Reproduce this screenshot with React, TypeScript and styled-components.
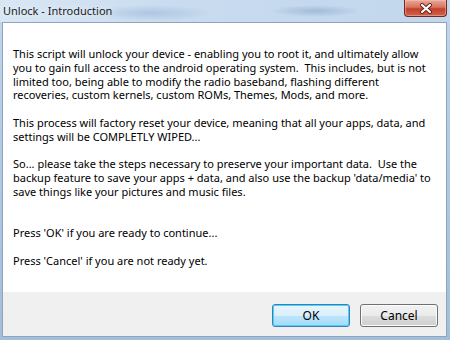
import { createGlobalStyle, styled } from 'styled-components';

const GlobalStyle = createGlobalStyle`
  html, body {
    margin: 0;
    padding: 0;
    background: #ffffff;
  }
`;

const MESSAGE = [
  'This script will unlock your device - enabling you to root it, and ultimately allow',
  'you to gain full access to the android operating system.  This includes, but is not',
  'limited too, being able to modify the radio baseband, flashing different',
  'recoveries, custom kernels, custom ROMs, Themes, Mods, and more.',
  '',
  'This process will factory reset your device, meaning that all your apps, data, and',
  'settings will be COMPLETLY WIPED...',
  '',
  'So... please take the steps necessary to preserve your important data.  Use the',
  "backup feature to save your apps + data, and also use the backup 'data/media' to",
  'save things like your pictures and music files.',
  '',
  '',
  "Press 'OK' if you are ready to continue...",
  '',
  "Press 'Cancel' if you are not ready yet.",
].join('\n');

export default function App() {
  return (
    <>
      <GlobalStyle />
      <StyledWindow>
        <StyledTitleBar>
          <StyledTitle>Unlock - Introduction</StyledTitle>
          <StyledClose aria-label="Close">
            <svg width="14" height="11" viewBox="0 0 14 11">
              <path d="M3 2 L11 9 M11 2 L3 9" stroke="#5a2318" strokeWidth="4" strokeLinecap="round" />
              <path d="M3 2 L11 9 M11 2 L3 9" stroke="#ffffff" strokeWidth="2.2" strokeLinecap="round" />
            </svg>
          </StyledClose>
        </StyledTitleBar>
        <StyledClient>
          <StyledContent>
            <StyledMessage>{MESSAGE}</StyledMessage>
          </StyledContent>
          <StyledFooter>
            <StyledButton $primary>OK</StyledButton>
            <StyledButton>Cancel</StyledButton>
          </StyledFooter>
        </StyledClient>
      </StyledWindow>
    </>
  );
}

const StyledWindow = styled.div`
  width: 450px;
  height: 340px;
  box-sizing: border-box;
  display: flex;
  flex-direction: column;
  padding: 0 3px 3px 2px;
  background: linear-gradient(to bottom, #c4d8ee 0%, #b6cde7 30%, #a4bdd9 100%);
  font-family: 'Noto Sans', 'Open Sans', sans-serif;
`;

const StyledTitleBar = styled.div`
  height: 22px;
  display: flex;
  align-items: flex-start;
  justify-content: space-between;
  background:
    radial-gradient(ellipse 60px 8px at 150px 13px, rgba(150, 180, 215, 0.55), transparent),
    radial-gradient(ellipse 45px 6px at 315px 11px, rgba(120, 150, 190, 0.45), transparent),
    linear-gradient(to right, #d9e7f5 0%, #c8dbef 40%, #c2d6ed 100%);
  margin: 0 -3px 0 -2px;
  padding: 0 3px 0 2px;
`;

const StyledTitle = styled.span`
  font-size: 11px;
  line-height: 22px;
  color: #1b1b1b;
  padding-left: 1px;
  text-shadow: 0 0 6px rgba(255, 255, 255, 0.9);
`;

const StyledClose = styled.div`
  width: 43px;
  height: 17px;
  box-sizing: border-box;
  display: flex;
  align-items: center;
  justify-content: center;
  border: 1px solid #6e2a20;
  border-top: none;
  border-radius: 0 0 4px 4px;
  background: linear-gradient(to bottom, #e9a999 0%, #d8735e 45%, #c3402a 55%, #d2624a 100%);
  box-shadow: inset 0 0 0 1px rgba(255, 200, 190, 0.45);
`;

const StyledClient = styled.div`
  flex: 1;
  display: flex;
  flex-direction: column;
  border: 1px solid #8ea4bf;
  background: #ffffff;
`;

const StyledContent = styled.div`
  flex: 1;
  padding: 24px 0 0 10px;
`;

const StyledMessage = styled.div`
  white-space: pre;
  font-size: 11px;
  line-height: 13.8px;
  color: #000000;
`;

const StyledFooter = styled.div`
  height: 44px;
  box-sizing: border-box;
  display: flex;
  justify-content: flex-end;
  align-items: flex-start;
  gap: 10px;
  padding: 12px 8px 0 0;
  background: #f0f0f0;
`;

const StyledButton = styled.div<{ $primary?: boolean }>`
  width: 78px;
  height: 23px;
  box-sizing: border-box;
  display: flex;
  align-items: center;
  justify-content: center;
  font-size: 12px;
  color: #000000;
  border-radius: 3px;
  border: 1px solid ${(props) => (props.$primary ? '#3c7fb1' : '#707070')};
  background: ${(props) =>
    props.$primary
      ? 'linear-gradient(to bottom, #eaf6fd 0%, #d9f0fc 50%, #bee6fd 51%, #a7d9f5 100%)'
      : 'linear-gradient(to bottom, #f2f2f2 0%, #ebebeb 50%, #dddddd 51%, #cfcfcf 100%)'};
  box-shadow: ${(props) =>
    props.$primary ? 'inset 0 0 0 1px #48d4ff' : 'inset 0 0 0 1px #fcfcfc'};
`;
